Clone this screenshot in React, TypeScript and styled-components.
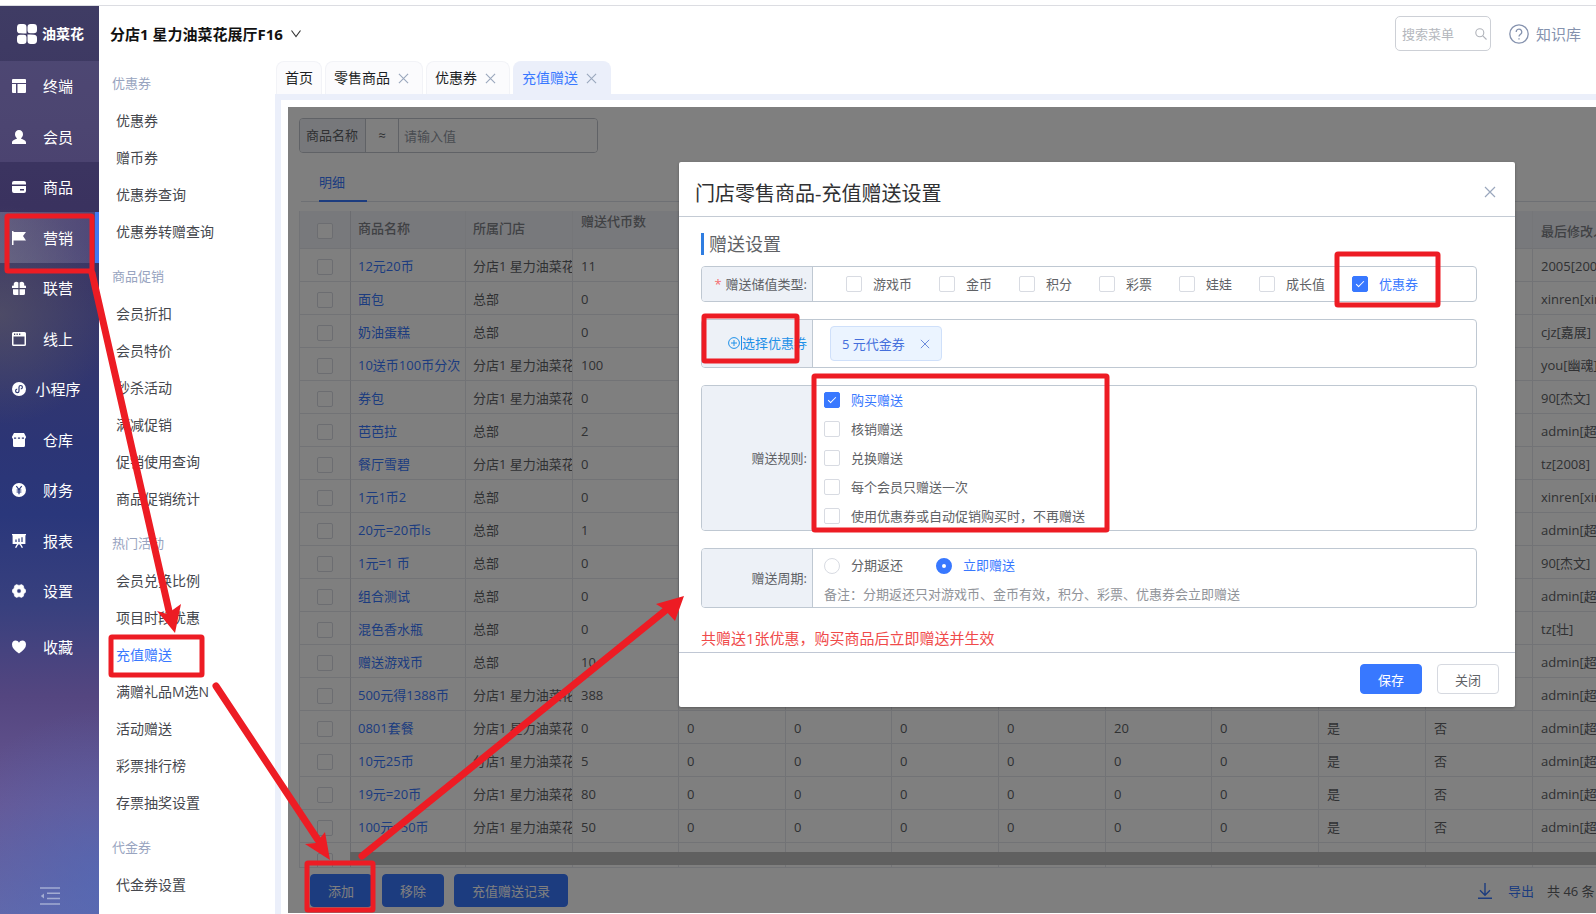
import React from 'react';
import styled, { createGlobalStyle, css } from 'styled-components';

const BLUE = '#3878ff';

const GlobalStyle = createGlobalStyle`
  *, *::before, *::after { box-sizing: border-box; }
  html, body { margin: 0; height: 100%; overflow: hidden; }
  body {
    background: #fff;
    color: #606266;
    font-family: "Open Sans", "Noto Sans CJK SC", sans-serif;
    font-size: 13px;
    line-height: 20px;
  }
  button, input { font-family: inherit; }
  a { text-decoration: none; color: inherit; }
`;

const Page = styled.div`
  position: relative;
  display: flex;
  height: 100vh;
  padding-top: 6px;
  overflow: hidden;
  &::before {
    content: '';
    position: absolute;
    top: 5px;
    left: 0;
    right: 0;
    height: 1px;
    background: #dcdde2;
  }
`;

/* ---------- primary navigation ---------- */

const Nav = styled.nav`
  flex: none;
  width: 99px;
  display: flex;
  flex-direction: column;
  color: #fff;
  background:
    radial-gradient(circle at 110% 96%, rgba(76, 106, 188, 0.6), rgba(76, 106, 188, 0) 170px),
    radial-gradient(circle at 0% 34%, rgba(92, 88, 100, 0.6), rgba(92, 88, 100, 0) 110px),
    linear-gradient(180deg, #3f3c64 0%, #3a325f 22%, #37376a 34%, #2c3575 48%, #2a377b 56%, #38407e 66%, #544680 76%, #685894 88%, #6468a8 100%);
`;

const Logo = styled.div`
  height: 55px;
  display: flex;
  align-items: center;
  gap: 5px;
  padding-left: 17px;
  font-size: 14px;
  font-weight: 700;
  white-space: nowrap;
`;

const NavList = styled.ul`
  list-style: none;
  margin: 0;
  padding: 0;
  display: grid;
  grid-template-rows: repeat(5, 50px 51px) 50px 62px;
`;

const NavLink = styled.a<{ $tone?: 'light' | 'active' }>`
  position: relative;
  display: flex;
  align-items: center;
  height: 100%;
  padding-left: 12px;
  font-size: 15px;
  ${p => p.$tone === 'light' && css`background: rgba(150, 140, 190, 0.18);`}
  ${p => p.$tone === 'active' && css`
    background: linear-gradient(90deg, rgba(150, 150, 170, 0.42), rgba(150, 140, 190, 0.24));
    border-right: 4px solid #4078f0;
  `}
`;

const NavIcon = styled.svg`
  flex: none;
  width: 14px;
  height: 14px;
  fill: #fff;
`;

const NavLabel = styled.span`
  width: 64px;
  text-align: center;
  white-space: nowrap;
`;

const Collapse = styled.button`
  margin: auto 0 9px 40px;
  padding: 0;
  width: 20px;
  height: 18px;
  border: 0;
  background: none;
  color: #a3acd2;
  line-height: 0;
`;

/* ---------- secondary menu ---------- */

const Main = styled.div`
  flex: 1;
  min-width: 0;
  display: flex;
  flex-direction: column;
`;

const Header = styled.header`
  flex: none;
  height: 55px;
  display: flex;
  align-items: center;
  padding-left: 11px;
`;

const StoreButton = styled.button`
  display: flex;
  align-items: center;
  gap: 8px;
  padding: 0;
  border: 0;
  background: none;
  color: #111;
  font-size: 15px;
  font-weight: 700;
  white-space: nowrap;
`;

const Search = styled.label`
  margin-left: auto;
  display: flex;
  align-items: center;
  width: 96px;
  height: 35px;
  padding: 0 3px 0 6px;
  border: 1px solid #cdd0d6;
  border-radius: 5px;
  color: #b0b3ba;
  input {
    flex: 1;
    min-width: 0;
    padding: 0;
    border: 0;
    outline: 0;
    background: none;
    font-size: 13px;
  }
  input::placeholder { color: #b4b7bd; opacity: 1; }
`;

const Help = styled.a`
  display: flex;
  align-items: center;
  gap: 7px;
  margin: 0 15px 0 18px;
  font-size: 15px;
  color: #8592ae;
`;

const Body = styled.div`
  flex: 1;
  min-height: 0;
  display: flex;
`;

const Menu = styled.aside`
  flex: none;
  width: 176px;
  padding: 4px 0 0 13px;
  overflow: hidden;
`;

const MenuGroup = styled.section`
  margin-bottom: 8px;
`;

const MenuHeading = styled.h2`
  margin: 0;
  font-size: 13px;
  font-weight: 400;
  line-height: 37px;
  color: #98a4c0;
`;

const MenuItem = styled.a<{ $active?: boolean }>`
  display: block;
  padding-left: 4px;
  font-size: 14px;
  line-height: 37px;
  color: ${p => (p.$active ? BLUE : '#45474d')};
`;

/* ---------- work area ---------- */

const Work = styled.main`
  flex: 1;
  min-width: 0;
  display: flex;
  flex-direction: column;
`;

const Tabs = styled.div`
  flex: none;
  display: flex;
  gap: 3px;
  padding-left: 1px;
`;

const Tab = styled.div<{ $active?: boolean }>`
  display: flex;
  align-items: center;
  gap: 8px;
  height: 33px;
  padding: 0 13px 0 8px;
  border: 1px solid #f2f3f7;
  border-bottom: 0;
  border-radius: 8px 8px 0 0;
  background: #fbfbfd;
  font-size: 14px;
  color: #1d1f24;
  &:first-child { padding: 0 8px; }
  ${p => p.$active && css`background: #ebeffa; border-color: #ebeffa; color: ${BLUE};`}
`;

const IconButton = styled.button`
  padding: 0;
  border: 0;
  background: none;
  color: #9aa7bd;
  line-height: 0;
`;

const Frame = styled.div`
  flex: 1;
  min-height: 0;
  border: solid #ebeffa;
  border-width: 6px 0 0 6px;
  padding: 7px 0 1px 7px;
  display: flex;
`;

const Panel = styled.section`
  position: relative;
  flex: 1;
  min-width: 0;
  display: flex;
  flex-direction: column;
  padding: 11px 0 0 11px;
  overflow: hidden;
`;

const Filter = styled.div`
  flex: none;
  display: flex;
  align-self: flex-start;
  height: 35px;
  border: 1px solid #c0c4cc;
  border-radius: 4px;
  overflow: hidden;
  line-height: 33px;
  label { width: 66px; padding-left: 6px; background: #eef1f6; border-right: 1px solid #c0c4cc; }
  span { width: 33px; text-align: center; border-right: 1px solid #c0c4cc; }
  input {
    width: 198px;
    padding: 0 5px;
    border: 0;
    outline: 0;
    font-size: 13px;
  }
  input::placeholder { color: #9298a3; opacity: 1; }
`;

const DetailTabs = styled.div`
  flex: none;
  height: 49px;
  display: flex;
  align-items: flex-end;
  margin-left: 2px;
  padding-left: 18px;
  border-bottom: 1px solid #dde1e8;
`;

const DetailTab = styled.button`
  width: 48px;
  height: 38px;
  margin-bottom: -1px;
  padding: 0 0 2px;
  border: 0;
  border-bottom: 2px solid ${BLUE};
  background: none;
  color: ${BLUE};
  font-size: 13px;
  text-align: left;
`;

const TableArea = styled.div`
  position: relative;
  flex: 1;
  min-height: 0;
  margin-top: 9px;
  overflow: hidden;
  border-left: 1px solid #e4e7ed;
  border-bottom: 1px solid #e4e7ed;
`;

const Table = styled.table`
  width: max(100%, 1340px);
  table-layout: fixed;
  border-collapse: separate;
  border-spacing: 0;
  th, td {
    height: 33px;
    padding: 2px 0 0 8px;
    border-right: 1px solid #e4e7ed;
    border-bottom: 1px solid #e4e7ed;
    white-space: nowrap;
    overflow: hidden;
    text-align: left;
    font-size: 13px;
  }
  th {
    height: 38px;
    padding: 0 0 3px 8px;
    background: #f0f2f8;
    font-weight: 500;
    color: #808389;
    border-right-color: #eaecf2;
  }
  th:nth-child(2), th:nth-child(3), td:nth-child(2), td:nth-child(3) { padding-left: 7px; }
  th:nth-child(4) { padding-bottom: 17px; }
  th:last-child { padding: 3px 0 0 8px; }
  td:first-child, th:first-child {
    padding: 3px 0 0 17px;
    line-height: 0;
    border-right-color: #d6d9e0;
  }
  a { color: ${BLUE}; }
`;

const ScrollBar = styled.div`
  position: absolute;
  left: 50px;
  right: 0;
  bottom: 2px;
  height: 13px;
  background: #c0c0c0;
`;

const Footer = styled.footer`
  flex: none;
  display: flex;
  align-items: center;
  height: 45px;
  gap: 10px;
  padding-left: 11px;
`;

const Button = styled.button<{ $plain?: boolean; $tall?: boolean }>`
  height: ${p => (p.$tall ? 33 : 30)}px;
  padding: 0 17px;
  border: 1px solid ${p => (p.$plain ? '#d6d9e0' : BLUE)};
  border-radius: 4px;
  background: ${p => (p.$plain ? '#fff' : BLUE)};
  color: ${p => (p.$plain ? '#606266' : '#fff')};
  font-size: 13px;
`;

const Export = styled.a`
  display: flex;
  align-items: center;
  gap: 16px;
  margin: 0 3px 0 auto;
  color: ${BLUE};
`;

const Total = styled.span`
  flex: none;
  width: 49px;
  overflow: hidden;
  white-space: nowrap;
`;

const Mask = styled.div`
  position: absolute;
  inset: 0;
  background: rgba(0, 0, 0, 0.5);
`;

/* ---------- dialog ---------- */

const Dialog = styled.div`
  position: absolute;
  top: 55px;
  left: 391px;
  right: 81px;
  background: #fff;
  border-radius: 2px;
  box-shadow: 0 1px 3px rgba(0, 0, 0, 0.3);
`;

const DialogHeader = styled.div`
  display: flex;
  align-items: center;
  justify-content: space-between;
  height: 55px;
  padding: 5px 19px 0 16px;
  border-bottom: 1px solid #c4cbd4;
  h1 { margin: 0; padding-top: 4px; font-size: 20px; font-weight: 400; color: #303133; }
`;

const DialogBody = styled.div`
  display: flex;
  flex-direction: column;
  gap: 17px;
  padding: 16px 38px 0 22px;
`;

const SectionTitle = styled.h2`
  margin: 0 0 -6px;
  padding-left: 5px;
  border-left: 3px solid #2f7de1;
  font-size: 18px;
  font-weight: 400;
  line-height: 22px;
`;

const FormRow = styled.div<{ $height: number }>`
  display: flex;
  min-height: ${p => p.$height}px;
  border: 1px solid #bfc8d2;
  border-radius: 4px;
  overflow: hidden;
`;

const FormLabel = styled.div`
  flex: none;
  display: flex;
  align-items: center;
  justify-content: flex-end;
  width: 111px;
  padding: 0 5px 1px 0;
  background: #edf1f7;
  border-right: 1px solid #bfc8d2;
  white-space: nowrap;
  i { color: #f56c6c; font-style: normal; margin-right: 4px; }
`;

const PickCoupon = styled.button`
  display: flex;
  align-items: center;
  padding: 0;
  border: 0;
  background: none;
  color: #1e90e8;
  font-size: 13px;
  span { border-left: 1px solid #1e90e8; line-height: 14px; }
  svg { margin-right: 1px; }
`;

const InlineOptions = styled.div`
  display: flex;
  align-items: center;
  gap: 27px;
  padding-left: 33px;
`;

const StackedOptions = styled.div`
  flex: 1;
  display: grid;
  grid-template-rows: repeat(5, 1fr);
  padding-left: 11px;
`;

const CycleOptions = styled.div`
  display: flex;
  flex-direction: column;
  justify-content: space-between;
  padding: 6px 0 3px 11px;
`;

const RadioLine = styled.div`
  display: flex;
  gap: 33px;
`;

const Note = styled.p`
  margin: 0;
  color: #909399;
`;

const Option = styled.label<{ $on?: boolean }>`
  display: flex;
  align-items: center;
  gap: 11px;
  white-space: nowrap;
  color: ${p => (p.$on ? BLUE : '#606266')};
`;

const Check = styled.input.attrs({ type: 'checkbox' })`
  position: relative;
  appearance: none;
  flex: none;
  width: 16px;
  height: 16px;
  margin: 0;
  border: 1px solid #d8dbe2;
  border-radius: 2px;
  background: #fff;
  &:checked { background: ${BLUE}; border-color: ${BLUE}; }
  &:checked::after {
    content: '';
    position: absolute;
    left: 5px;
    top: 2px;
    width: 4px;
    height: 8px;
    border: solid #fff;
    border-width: 0 1px 1px 0;
    transform: rotate(45deg);
  }
`;

const Radio = styled.input.attrs({ type: 'radio' })`
  appearance: none;
  flex: none;
  width: 16px;
  height: 16px;
  margin: 2px 0 0;
  border: 1px solid #d8dbe2;
  border-radius: 50%;
  background: #fff;
  &:checked { border: 6px solid ${BLUE}; }
`;

const Tag = styled.span`
  align-self: center;
  display: flex;
  align-items: center;
  justify-content: space-between;
  width: 112px;
  height: 35px;
  margin-left: 17px;
  padding: 0 11px;
  border: 1px solid #cfe0fa;
  border-radius: 4px;
  background: #ebf4ff;
  color: #456fdc;
  white-space: nowrap;
  button { color: #6c8bdc; }
`;

const Summary = styled.p`
  margin: 3px 0 4px;
  font-size: 15px;
  color: #f04a4a;
`;

const DialogFooter = styled.div`
  display: flex;
  justify-content: flex-end;
  gap: 15px;
  padding: 11px 16px 13px 0;
  border-top: 1px solid #c0c7d4;
`;

const Marks = styled.svg`
  position: absolute;
  top: 0;
  left: 0;
  width: 100%;
  height: 100%;
  pointer-events: none;
`;

/* ---------- icons ---------- */

const CloseIcon = ({ size = 11 }: { size?: number }) => (
  <svg width={size} height={size} viewBox="0 0 12 12" stroke="currentColor" strokeWidth="1.2" fill="none">
    <path d="M1 1 L11 11 M11 1 L1 11" />
  </svg>
);

const navIcons: Record<string, React.ReactNode> = {
  终端: <path d="M1 0h12a1 1 0 0 1 1 1v3H0V1a1 1 0 0 1 1-1zM0 5h4v9H1a1 1 0 0 1-1-1zM5.500 5H14v8a1 1 0 0 1-1 1H5.500z" />,
  会员: <path d="M7 0c2.300 0 4 1.700 4 4.200 0 1.700-.8 3.200-2 4 .2 1.100 5 1.300 5 4.300V14H0v-1.500c0-3 4.800-3.200 5-4.300-1.200-.8-2-2.300-2-4C3 1.700 4.700 0 7 0z" />,
  商品: <path fillRule="evenodd" d="M2 1h10a2 2 0 0 1 2 2v1.500H0V3a2 2 0 0 1 2-2zM0 6h14v5a2 2 0 0 1-2 2H2a2 2 0 0 1-2-2zm8 3v1.500h4V9z" />,
  营销: <path d="M0 0h1.500v1H14l-3 4 3 4.500H1.500V14H0z" />,
  联营: <path d="M6.400 5.500V7H0V5.500A1 1 0 0 1 1 4.500h1C.8 2 3.500-.8 6.400 1.600zM7.600 5.500V7H14V5.500a1 1 0 0 0-1-1h-1C13.200 2 10.500-.8 7.600 1.600zM1 8.200h5.400V14H2.500A1.500 1.500 0 0 1 1 12.500zM7.600 8.200H13v4.300a1.500 1.500 0 0 1-1.500 1.500H7.600z" />,
  线上: <path fillRule="evenodd" d="M1.500 0h11A1.500 1.500 0 0 1 14 1.500v11a1.500 1.500 0 0 1-1.500 1.500h-11A1.500 1.500 0 0 1 0 12.500v-11A1.500 1.500 0 0 1 1.500 0zM1.500 4.500v8h11v-8zM2 1.600v1.300h1.300V1.600zm2.500 0v1.300h1.300V1.600zm2.500 0v1.300h1.300V1.600z" />,
  小程序: (
    <>
      <circle cx="7" cy="7" r="7" />
      <path d="M5.200 7.200a1.700 1.700 0 1 0 1.800 1.700V5.200a1.700 1.700 0 1 1 1.800 1.700" fill="none" stroke="#2f3a74" strokeWidth="1.200" />
    </>
  ),
  仓库: <path fillRule="evenodd" d="M2 0h10l2 3.800c0 1-.4 1.600-1 2V12.500a1.500 1.500 0 0 1-1.500 1.500h-9A1.500 1.500 0 0 1 1 12.500V5.800c-.6-.4-1-1-1-2zM2 4.500v1.200h2.200V4.500zm3.900 0v1.200h2.200V4.500zm3.900 0v1.200H12V4.500z" />,
  财务: (
    <>
      <circle cx="7" cy="7" r="7" />
      <path d="M4.300 3.200 7 6.600l2.700-3.400M7 6.600v4.600M4.600 7h4.800M4.600 9h4.800" fill="none" stroke="#28387e" strokeWidth="1.200" />
    </>
  ),
  报表: (
    <>
      <path d="M0 0h14v1.200h-.6V10H9l2 3.500-1.200.5L7.700 10.500H6.300L4.200 14 3 13.500 5 10H.6V1.200H0z" />
      <path d="M4 8V5.500M7 8V4.500M10 8V3.200" stroke="#2c3a7c" strokeWidth="1.200" />
    </>
  ),
  设置: (
    <path
      fillRule="evenodd"
      d="M4.500.6 7 1.400 9.500.6l1.900 1.200.5 2.400L13.700 6v2l-1.800 1.800-.5 2.400-1.900 1.200L7 12.600l-2.500.8-1.900-1.200-.5-2.400L.3 8V6l1.800-1.800.5-2.400zM7 4.800a2.200 2.200 0 1 0 0 4.400 2.200 2.200 0 0 0 0-4.400z"
      stroke="#fff"
      strokeWidth="0.600"
      strokeLinejoin="round"
    />
  ),
  收藏: <path d="M7 13.600C2.500 10.500 0 7.800 0 4.500 0 2.200 1.600.6 3.600.6 5.100.6 6.300 1.400 7 2.700 7.700 1.400 8.900.6 10.400.6c2 0 3.600 1.600 3.600 3.900 0 3.300-2.500 6-7 9.100z" />,
};

/* ---------- data ---------- */

const menu = [
  { title: '优惠券', items: ['优惠券', '赠币券', '优惠券查询', '优惠券转赠查询'] },
  { title: '商品促销', items: ['会员折扣', '会员特价', '秒杀活动', '满减促销', '促销使用查询', '商品促销统计'] },
  { title: '热门活动', items: ['会员兑换比例', '项目时段优惠', '充值赠送', '满赠礼品M选N', '活动赠送', '彩票排行榜', '存票抽奖设置'] },
  { title: '代金券', items: ['代金券设置'] },
];

const BRANCH = '分店1 星力油菜花展厅F16';
const HQ = '总部';
const ADMIN = 'admin[超级管理员]';
const widths = [51, 115, 107, 106, 107, 106, 107, 107, 106, 107, 107, 107];

type Row = { name: string; store: string; coins: number; rest?: (string | number)[]; editor: string };
const rows: Row[] = [
  { name: '12元20币', store: BRANCH, coins: 11, editor: '2005[2005]' },
  { name: '面包', store: HQ, coins: 0, editor: 'xinren[xinren]' },
  { name: '奶油蛋糕', store: HQ, coins: 0, editor: 'cjz[嘉展]' },
  { name: '10送币100币分次', store: BRANCH, coins: 100, editor: 'you[幽魂]' },
  { name: '券包', store: BRANCH, coins: 0, editor: '90[杰文]' },
  { name: '芭芭拉', store: HQ, coins: 2, editor: ADMIN },
  { name: '餐厅雪碧', store: BRANCH, coins: 0, editor: 'tz[2008]' },
  { name: '1元1币2', store: HQ, coins: 0, editor: 'xinren[xinren]' },
  { name: '20元=20币ls', store: HQ, coins: 1, editor: ADMIN },
  { name: '1元=1 币', store: HQ, coins: 0, editor: '90[杰文]' },
  { name: '组合测试', store: HQ, coins: 0, editor: ADMIN },
  { name: '混色香水瓶', store: HQ, coins: 0, editor: 'tz[壮]' },
  { name: '赠送游戏币', store: HQ, coins: 10, editor: ADMIN },
  { name: '500元得1388币', store: BRANCH, coins: 388, editor: ADMIN },
  { name: '0801套餐', store: BRANCH, coins: 0, rest: [0, 0, 0, 0, 20, 0, '是', '否'], editor: ADMIN },
  { name: '10元25币', store: BRANCH, coins: 5, rest: [0, 0, 0, 0, 0, 0, '是', '否'], editor: ADMIN },
  { name: '19元=20币', store: BRANCH, coins: 80, rest: [0, 0, 0, 0, 0, 0, '是', '否'], editor: ADMIN },
  { name: '100元=50币', store: BRANCH, coins: 50, rest: [0, 0, 0, 0, 0, 0, '是', '否'], editor: ADMIN },
];
const blanks = ['', '', '', '', '', '', '', ''];

const giftTypes = ['游戏币', '金币', '积分', '彩票', '娃娃', '成长值', '优惠券'];
const rules = ['购买赠送', '核销赠送', '兑换赠送', '每个会员只赠送一次', '使用优惠券或自动促销购买时，不再赠送'];

const MarkBox = ({ x, y, w, h }: { x: number; y: number; w: number; h: number }) => (
  <rect x={x} y={y} width={w} height={h} rx="1" fill="none" stroke="#ed1c24" strokeWidth="5" />
);

export default function App() {
  return (
    <Page>
      <GlobalStyle />
      <Nav>
        <Logo>
          <svg width="20" height="20" viewBox="0 0 20 20" fill="#fff">
            <path d="M3.500 0h2.800A3.200 3.200 0 0 1 9.500 3.200v6.300H6.500L3 9.300A3.200 3.200 0 0 1 0 6V3.300A3.400 3.400 0 0 1 3.500 0z" />
            <path d="M13.700 0h2.900A3.400 3.400 0 0 1 20 3.400v2.700a3.200 3.200 0 0 1-3.200 3.200H13A2.500 2.500 0 0 1 10.500 7V3.200A3.200 3.200 0 0 1 13.700 0z" />
            <path d="M3.200 10.700H7A2.500 2.500 0 0 1 9.500 13v3.800A3.200 3.200 0 0 1 6.300 20H3.400A3.400 3.400 0 0 1 0 16.600v-2.700a3.200 3.200 0 0 1 3.200-3.200z" />
            <path d="M10.500 10.500h3l3.500.2a3.200 3.200 0 0 1 3 3.200v2.700A3.400 3.400 0 0 1 16.600 20h-2.900a3.200 3.200 0 0 1-3.200-3.200z" />
          </svg>
          油菜花
        </Logo>
        <NavList>
          {Object.keys(navIcons).map((label, i) => (
            <li key={label}>
              <NavLink href="#" $tone={label === '营销' ? 'active' : i < 2 ? 'light' : undefined}>
                <NavIcon viewBox="0 0 14 14">{navIcons[label]}</NavIcon>
                <NavLabel>{label}</NavLabel>
              </NavLink>
            </li>
          ))}
        </NavList>
        <Collapse aria-label="收起">
          <svg width="20" height="18" viewBox="0 0 20 18" stroke="currentColor" strokeWidth="1.500" fill="currentColor">
            <path d="M0 1h20M7 6.300h13M7 11.600h13M0 17h20" />
            <path d="M4 6.500v5L.8 9z" stroke="none" />
          </svg>
        </Collapse>
      </Nav>

      <Main>
        <Header>
          <StoreButton>
            {BRANCH}
            <svg width="10" height="8" viewBox="0 0 10 8" fill="none" stroke="#333" strokeWidth="1.100">
              <path d="M.5.5 5 6.500 9.500.5" />
            </svg>
          </StoreButton>
          <Search>
            <input placeholder="搜索菜单" aria-label="搜索菜单" />
            <svg width="12" height="12" viewBox="0 0 12 12" fill="none" stroke="currentColor" strokeWidth="1.100">
              <circle cx="4.800" cy="4.800" r="4" />
              <path d="M7.800 7.800 11.500 11.500" />
            </svg>
          </Search>
          <Help href="#">
            <svg width="20" height="20" viewBox="0 0 20 20" fill="none" stroke="currentColor" strokeWidth="1.300">
              <circle cx="10" cy="10" r="9.200" />
              <path d="M7.200 8a2.800 2.800 0 1 1 4.400 2.200c-1 .7-1.600 1.100-1.600 2.300M10 14.200v1.300" />
            </svg>
            知识库
          </Help>
        </Header>

        <Body>
          <Menu>
            {menu.map(g => (
              <MenuGroup key={g.title}>
                <MenuHeading>{g.title}</MenuHeading>
                {g.items.map(it => (
                  <MenuItem key={it} href="#" $active={it === '充值赠送'}>{it}</MenuItem>
                ))}
              </MenuGroup>
            ))}
          </Menu>

          <Work>
            <Tabs>
              {['首页', '零售商品', '优惠券', '充值赠送'].map((t, i) => (
                <Tab key={t} $active={i === 3}>
                  {t}
                  {i > 0 && <IconButton aria-label="关闭标签"><CloseIcon /></IconButton>}
                </Tab>
              ))}
            </Tabs>
            <Frame>
              <Panel>
                <Filter>
                  <label htmlFor="goods-name">商品名称</label>
                  <span>≈</span>
                  <input id="goods-name" placeholder="请输入值" />
                </Filter>
                <DetailTabs><DetailTab>明细</DetailTab></DetailTabs>
                <TableArea>
                  <Table>
                    <colgroup>
                      {widths.map((w, i) => <col key={i} width={w} />)}
                      <col />
                    </colgroup>
                    <thead>
                      <tr>
                        <th><Check aria-label="全选" /></th>
                        <th>商品名称</th>
                        <th>所属门店</th>
                        <th>赠送代币数</th>
                        {blanks.map((_, i) => <th key={i} />)}
                        <th>最后修改人</th>
                      </tr>
                    </thead>
                    <tbody>
                      {rows.map(r => (
                        <tr key={r.name}>
                          <td><Check aria-label={r.name} /></td>
                          <td><a href="#">{r.name}</a></td>
                          <td>{r.store}</td>
                          <td>{r.coins}</td>
                          {(r.rest || blanks).map((v, i) => <td key={i}>{v}</td>)}
                          <td>{r.editor}</td>
                        </tr>
                      ))}
                      <tr>
                        <td><Check aria-label="选择" /></td>
                        <td /><td /><td />
                        {blanks.map((_, i) => <td key={i} />)}
                        <td />
                      </tr>
                    </tbody>
                  </Table>
                  <ScrollBar />
                </TableArea>
                <Footer>
                  <Button $tall>添加</Button>
                  <Button $tall>移除</Button>
                  <Button $tall>充值赠送记录</Button>
                  <Export href="#">
                    <svg width="14" height="16" viewBox="0 0 14 16" fill="none" stroke="currentColor" strokeWidth="1.400">
                      <path d="M7 0v12M2 7.200l5 5 5-5M0 15.300h14" />
                    </svg>
                    导出
                  </Export>
                  <Total>共 46 条</Total>
                </Footer>
                <Mask />

                <Dialog role="dialog" aria-labelledby="dialog-title">
                  <DialogHeader>
                    <h1 id="dialog-title">门店零售商品-充值赠送设置</h1>
                    <IconButton aria-label="关闭窗口"><CloseIcon size={12} /></IconButton>
                  </DialogHeader>
                  <DialogBody>
                    <SectionTitle>赠送设置</SectionTitle>
                    <FormRow $height={36}>
                      <FormLabel><i>*</i>赠送储值类型:</FormLabel>
                      <InlineOptions>
                        {giftTypes.map(t => (
                          <Option key={t} $on={t === '优惠券'}>
                            <Check defaultChecked={t === '优惠券'} />{t}
                          </Option>
                        ))}
                      </InlineOptions>
                    </FormRow>
                    <FormRow $height={49}>
                      <FormLabel>
                        <PickCoupon>
                          <svg width="12" height="12" viewBox="0 0 12 12" fill="none" stroke="currentColor" strokeWidth="1">
                            <circle cx="6" cy="6" r="5.400" />
                            <path d="M6 3v6M3 6h6" />
                          </svg>
                          <span>选择优惠券</span>
                        </PickCoupon>
                      </FormLabel>
                      <Tag>
                        5 元代金券
                        <IconButton aria-label="移除 5 元代金券"><CloseIcon size={10} /></IconButton>
                      </Tag>
                    </FormRow>
                    <FormRow $height={146}>
                      <FormLabel>赠送规则:</FormLabel>
                      <StackedOptions>
                        {rules.map((t, i) => (
                          <Option key={t} $on={i === 0}>
                            <Check defaultChecked={i === 0} />{t}
                          </Option>
                        ))}
                      </StackedOptions>
                    </FormRow>
                    <FormRow $height={60}>
                      <FormLabel>赠送周期:</FormLabel>
                      <CycleOptions>
                        <RadioLine>
                          <Option><Radio name="cycle" />分期返还</Option>
                          <Option $on><Radio name="cycle" defaultChecked />立即赠送</Option>
                        </RadioLine>
                        <Note>备注：分期返还只对游戏币、金币有效，积分、彩票、优惠券会立即赠送</Note>
                      </CycleOptions>
                    </FormRow>
                    <Summary>共赠送1张优惠，购买商品后立即赠送并生效</Summary>
                  </DialogBody>
                  <DialogFooter>
                    <Button>保存</Button>
                    <Button $plain>关闭</Button>
                  </DialogFooter>
                </Dialog>
              </Panel>
            </Frame>
          </Work>
        </Body>
      </Main>

      <Marks aria-hidden="true">
        <MarkBox x={7} y={216} w={85} h={55} />
        <MarkBox x={111} y={637} w={91} h={38} />
        <MarkBox x={307} y={863} w={66} h={47} />
        <MarkBox x={1337} y={254} w={101} h={51} />
        <MarkBox x={704} y={316} w={93} h={45} />
        <MarkBox x={814} y={376} w={293} h={154} />
        <g stroke="#ed1c24" strokeWidth="7" strokeLinecap="round">
          <path d="M92 273 169 611" />
          <path d="M216 686 318 840" />
          <path d="M362 856 666 610" />
        </g>
        <g fill="#ed1c24">
          <path d="M175 633 157 611 167 614 181 604z" />
          <path d="M330 860 305 844 316 843 325 832z" />
          <path d="M684 596 656 604 664 609 675 621z" />
        </g>
      </Marks>
    </Page>
  );
}
